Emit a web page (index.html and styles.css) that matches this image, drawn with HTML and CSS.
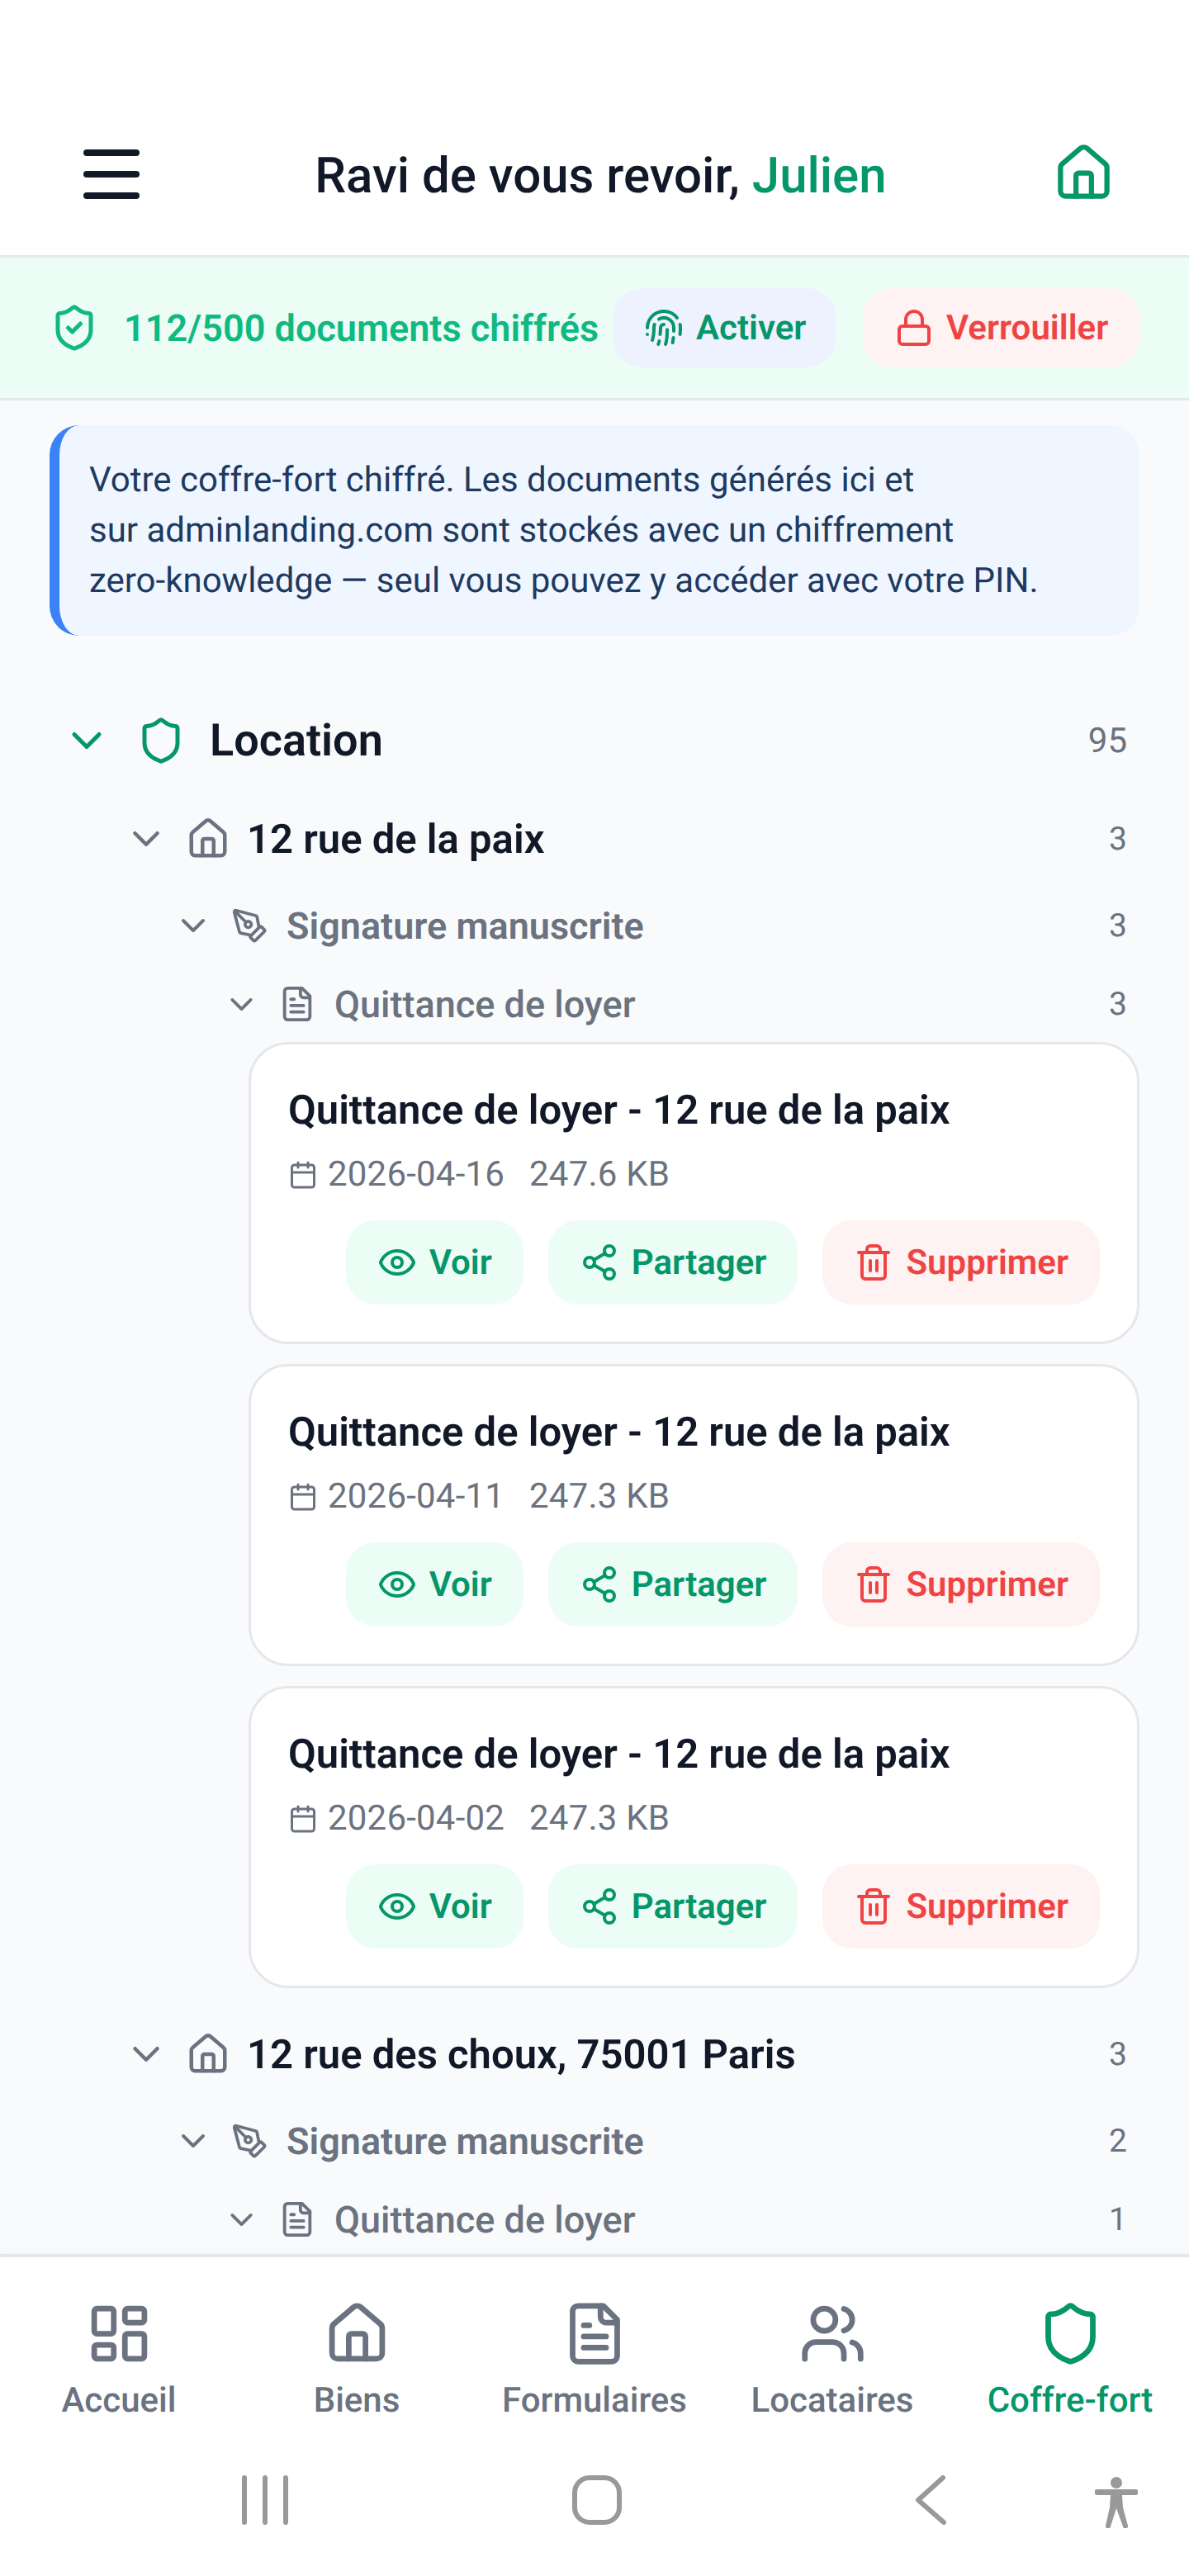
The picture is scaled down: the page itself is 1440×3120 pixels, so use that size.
FILE: index.html
```html
<!DOCTYPE html>
<html lang="fr">
<head>
<meta charset="utf-8">
<title>Coffre-fort</title>
<link rel="stylesheet" href="styles.css">
</head>
<body>
<svg class="defs" width="0" height="0" aria-hidden="true">
  <defs>
    <symbol id="i-home" viewBox="0 0 24 24"><path d="M15 21v-8a1 1 0 0 0-1-1h-4a1 1 0 0 0-1 1v8"/><path d="M3 10a2 2 0 0 1 .709-1.528l7-5.999a2 2 0 0 1 2.582 0l7 5.999A2 2 0 0 1 21 10v9a2 2 0 0 1-2 2H5a2 2 0 0 1-2-2z"/></symbol>
    <symbol id="i-shield" viewBox="0 0 24 24"><path d="M20 13c0 5-3.5 7.500-7.660 8.950a1 1 0 0 1-.670-.010C7.500 20.500 4 18 4 13V6a1 1 0 0 1 1-1c2 0 4.500-1.200 6.240-2.720a1.170 1.170 0 0 1 1.520 0C14.510 3.810 17 5 19 5a1 1 0 0 1 1 1z"/></symbol>
    <symbol id="i-chev" viewBox="0 0 24 24"><path d="m6 9 6 6 6-6"/></symbol>
    <symbol id="i-pen" viewBox="0 0 24 24"><path d="M15.707 21.293a1 1 0 0 1-1.414 0l-1.586-1.586a1 1 0 0 1 0-1.414l5.586-5.586a1 1 0 0 1 1.414 0l1.586 1.586a1 1 0 0 1 0 1.414z"/><path d="m18 13-1.375-6.874a1 1 0 0 0-.746-.776L3.235 2.028a1 1 0 0 0-1.207 1.207L5.350 15.879a1 1 0 0 0 .776.746L13 18"/><path d="m2.300 2.300 7.286 7.286"/><circle cx="11" cy="11" r="2"/></symbol>
    <symbol id="i-doc" viewBox="0 0 24 24"><path d="M15 2H6a2 2 0 0 0-2 2v16a2 2 0 0 0 2 2h12a2 2 0 0 0 2-2V7Z"/><path d="M14 2v4a2 2 0 0 0 2 2h4"/><path d="M10 9H8"/><path d="M16 13H8"/><path d="M16 17H8"/></symbol>
    <symbol id="i-cal" viewBox="0 0 24 24"><path d="M8 2v4M16 2v4"/><rect x="3" y="4" width="18" height="18" rx="2"/><path d="M3 10h18"/></symbol>
    <symbol id="i-eye" viewBox="0 0 24 24"><path d="M2.062 12.348a1 1 0 0 1 0-.696 10.750 10.750 0 0 1 19.876 0 1 1 0 0 1 0 .696 10.750 10.750 0 0 1-19.876 0"/><circle cx="12" cy="12" r="3"/></symbol>
    <symbol id="i-share" viewBox="0 0 24 24"><circle cx="18" cy="5" r="3"/><circle cx="6" cy="12" r="3"/><circle cx="18" cy="19" r="3"/><path d="m8.590 13.510 6.830 3.980M15.410 6.510l-6.820 3.980"/></symbol>
    <symbol id="i-trash" viewBox="0 0 24 24"><path d="M3 6h18"/><path d="M19 6v14a2 2 0 0 1-2 2H7a2 2 0 0 1-2-2V6"/><path d="M8 6V4a2 2 0 0 1 2-2h4a2 2 0 0 1 2 2v2"/><path d="M10 11v6M14 11v6"/></symbol>
  </defs>
</svg>

<div class="app">
  <header class="topbar">
    <button class="burger" aria-label="Menu"><span></span><span></span><span></span></button>
    <h1 class="greeting">Ravi de vous revoir, <em>Julien</em></h1>
    <svg class="ico ico-home-top"><use href="#i-home"/></svg>
  </header>

  <section class="vault-band">
    <svg class="ico ico-band" viewBox="0 0 24 24"><path d="M20 13c0 5-3.5 7.500-7.660 8.950a1 1 0 0 1-.670-.010C7.500 20.500 4 18 4 13V6a1 1 0 0 1 1-1c2 0 4.500-1.200 6.240-2.720a1.170 1.170 0 0 1 1.520 0C14.510 3.810 17 5 19 5a1 1 0 0 1 1 1z"/><path d="m9 12 2 2 4-4"/></svg>
    <span class="vault-count">112/500 documents chiffrés</span>
    <button class="pill pill-blue">
      <svg class="ico ico-pill" viewBox="0 0 24 24"><path d="M12 10a2 2 0 0 0-2 2c0 1.020-.100 2.510-.260 4"/><path d="M14 13.120c0 2.380 0 6.380-1 8.880"/><path d="M17.290 21.020c.120-.600.430-2.300.500-3.020"/><path d="M2 12a10 10 0 0 1 18-6"/><path d="M2 16h.010"/><path d="M21.800 16c.200-2 .131-5.354 0-6"/><path d="M5 19.500C5.500 18 6 15 6 12a6 6 0 0 1 .340-2"/><path d="M8.650 22c.210-.660.450-1.320.570-2"/><path d="M9 6.800a6 6 0 0 1 9 5.200v2"/></svg>
      Activer
    </button>
    <button class="pill pill-red">
      <svg class="ico ico-pill" viewBox="0 0 24 24"><rect x="3" y="11" width="18" height="11" rx="2"/><path d="M7 11V7a5 5 0 0 1 10 0v4"/></svg>
      Verrouiller
    </button>
  </section>

  <main class="content">
    <p class="notice">Votre coffre-fort chiffré. Les documents générés ici et<br>sur adminlanding.com sont stockés avec un chiffrement<br>zero-knowledge — seul vous pouvez y accéder avec votre PIN.</p>

    <div class="tree">
      <div class="row row-root">
        <svg class="ico chev"><use href="#i-chev"/></svg>
        <svg class="ico node"><use href="#i-shield"/></svg>
        <span class="label">Location</span>
        <span class="count">95</span>
      </div>

      <div class="row row-prop">
        <svg class="ico chev"><use href="#i-chev"/></svg>
        <svg class="ico node"><use href="#i-home"/></svg>
        <span class="label">12 rue de la paix</span>
        <span class="count">3</span>
      </div>
      <div class="row row-sign">
        <svg class="ico chev"><use href="#i-chev"/></svg>
        <svg class="ico node"><use href="#i-pen"/></svg>
        <span class="label">Signature manuscrite</span>
        <span class="count">3</span>
      </div>
      <div class="row row-type">
        <svg class="ico chev"><use href="#i-chev"/></svg>
        <svg class="ico node"><use href="#i-doc"/></svg>
        <span class="label">Quittance de loyer</span>
        <span class="count">3</span>
      </div>

      <div class="cards">
        <article class="card">
          <h2 class="card-title">Quittance de loyer - 12 rue de la paix</h2>
          <div class="meta">
            <svg class="ico ico-cal"><use href="#i-cal"/></svg>
            <span class="meta-date">2026-04-16</span><span>247.6 KB</span>
          </div>
          <div class="actions">
            <button class="act act-green"><svg class="ico ico-act"><use href="#i-eye"/></svg>Voir</button>
            <button class="act act-green"><svg class="ico ico-act"><use href="#i-share"/></svg>Partager</button>
            <button class="act act-red"><svg class="ico ico-act"><use href="#i-trash"/></svg>Supprimer</button>
          </div>
        </article>
        <article class="card">
          <h2 class="card-title">Quittance de loyer - 12 rue de la paix</h2>
          <div class="meta">
            <svg class="ico ico-cal"><use href="#i-cal"/></svg>
            <span class="meta-date">2026-04-11</span><span>247.3 KB</span>
          </div>
          <div class="actions">
            <button class="act act-green"><svg class="ico ico-act"><use href="#i-eye"/></svg>Voir</button>
            <button class="act act-green"><svg class="ico ico-act"><use href="#i-share"/></svg>Partager</button>
            <button class="act act-red"><svg class="ico ico-act"><use href="#i-trash"/></svg>Supprimer</button>
          </div>
        </article>
        <article class="card">
          <h2 class="card-title">Quittance de loyer - 12 rue de la paix</h2>
          <div class="meta">
            <svg class="ico ico-cal"><use href="#i-cal"/></svg>
            <span class="meta-date">2026-04-02</span><span>247.3 KB</span>
          </div>
          <div class="actions">
            <button class="act act-green"><svg class="ico ico-act"><use href="#i-eye"/></svg>Voir</button>
            <button class="act act-green"><svg class="ico ico-act"><use href="#i-share"/></svg>Partager</button>
            <button class="act act-red"><svg class="ico ico-act"><use href="#i-trash"/></svg>Supprimer</button>
          </div>
        </article>
      </div>

      <div class="row row-prop row-prop-next">
        <svg class="ico chev"><use href="#i-chev"/></svg>
        <svg class="ico node"><use href="#i-home"/></svg>
        <span class="label">12 rue des choux, 75001 Paris</span>
        <span class="count">3</span>
      </div>
      <div class="row row-sign">
        <svg class="ico chev"><use href="#i-chev"/></svg>
        <svg class="ico node"><use href="#i-pen"/></svg>
        <span class="label">Signature manuscrite</span>
        <span class="count">2</span>
      </div>
      <div class="row row-type">
        <svg class="ico chev"><use href="#i-chev"/></svg>
        <svg class="ico node"><use href="#i-doc"/></svg>
        <span class="label">Quittance de loyer</span>
        <span class="count">1</span>
      </div>
    </div>
  </main>

  <nav class="tabs">
    <a class="tab">
      <svg class="ico ico-tab" viewBox="0 0 24 24"><rect x="3" y="3" width="7" height="9" rx="1"/><rect x="14" y="3" width="7" height="5" rx="1"/><rect x="14" y="12" width="7" height="9" rx="1"/><rect x="3" y="16" width="7" height="5" rx="1"/></svg>
      <span>Accueil</span>
    </a>
    <a class="tab">
      <svg class="ico ico-tab"><use href="#i-home"/></svg>
      <span>Biens</span>
    </a>
    <a class="tab">
      <svg class="ico ico-tab"><use href="#i-doc"/></svg>
      <span>Formulaires</span>
    </a>
    <a class="tab">
      <svg class="ico ico-tab" viewBox="0 0 24 24"><path d="M16 21v-2a4 4 0 0 0-4-4H6a4 4 0 0 0-4 4v2"/><circle cx="9" cy="7" r="4"/><path d="M22 21v-2a4 4 0 0 0-3-3.870"/><path d="M16 3.130a4 4 0 0 1 0 7.750"/></svg>
      <span>Locataires</span>
    </a>
    <a class="tab tab-active">
      <svg class="ico ico-tab"><use href="#i-shield"/></svg>
      <span>Coffre-fort</span>
    </a>
  </nav>

  <div class="sysbar">
    <svg class="sys sys-recents" viewBox="0 0 56 60"><path d="M3 3v54M28 3v54M53 3v54"/></svg>
    <svg class="sys sys-home" viewBox="0 0 60 60"><rect x="3" y="3" width="54" height="54" rx="18"/></svg>
    <svg class="sys sys-back" viewBox="0 0 40 60"><path d="M34 3 4 30l31 27"/></svg>
    <svg class="sys sys-a11y" viewBox="0 0 52 62"><circle cx="26" cy="7" r="7" class="fill"/><path class="fill" d="M3 15h46a3 3 0 0 1 0 7H33l1 15 6 22a3 3 0 0 1-6 1l-8-22-7 22a3 3 0 0 1-6-1l5-22 1-15H3a3 3 0 0 1 0-7Z"/></svg>
  </div>
</div>
</body>
</html>
```

FILE: styles.css
```css
* { box-sizing: border-box; }
html, body { margin: 0; padding: 0; }
body {
  width: 1440px;
  height: 3120px;
  overflow: hidden;
  font-family: Roboto, "Liberation Sans", sans-serif;
  text-rendering: geometricPrecision;
  background: #fff;
  color: #111827;
}
.defs { position: absolute; }
button { font: inherit; border: 0; margin: 0; text-rendering: inherit; }
h1, h2, p { margin: 0; }
em { font-style: normal; }

.ico {
  fill: none;
  stroke: currentColor;
  stroke-width: 2;
  stroke-linecap: round;
  stroke-linejoin: round;
  flex: none;
  display: block;
}

.app {
  display: flex;
  flex-direction: column;
  height: 3120px;
}

/* Top bar */
.topbar {
  height: 312px;
  flex: none;
  display: flex;
  align-items: center;
  padding: 120px 90px 0 90px;
  background: #fff;
  border-bottom: 3px solid #e5e7eb;
}
.burger {
  width: 90px;
  background: none;
  padding: 0 0 0 11px;
  display: flex;
  flex-direction: column;
  gap: 18px;
  margin-top: -7px;
  flex: none;
}
.burger span {
  display: block;
  width: 68px;
  height: 8px;
  border-radius: 4px;
  background: #111827;
}
.greeting {
  flex: 1;
  text-align: center;
  font-size: 60px;
  font-weight: 500;
  line-height: 72px;
  color: #111827;
  margin-top: -4px;
}
.greeting em { color: #059669; }
.ico-home-top {
  width: 75px;
  height: 75px;
  color: #059669;
  margin-top: -11px;
}

/* Vault band */
.vault-band {
  height: 173px;
  flex: none;
  display: flex;
  align-items: center;
  padding: 0 60px;
  background: #ecfdf5;
  border-bottom: 3px solid #e5e7eb;
}
.ico-band { width: 60px; height: 60px; color: #10b981; margin-right: 30px; }
.vault-count {
  font-size: 45px;
  font-weight: 600;
  color: #10b981;
  white-space: nowrap;
  flex: 1;
}
.pill {
  height: 96px;
  border-radius: 36px;
  display: flex;
  align-items: center;
  gap: 15px;
  padding: 0 38px;
  font-size: 42px;
  font-weight: 600;
  flex: none;
}
.pill-blue { background: #eef2ff; color: #059669; width: 271px; margin-right: 32px; }
.pill-red { background: #fef2f2; color: #ef4444; width: 335px; }
.ico-pill { width: 48px; height: 48px; }

/* Main */
.content {
  flex: 1;
  min-height: 0;
  overflow: hidden;
  background: #f9fafb;
  padding: 30px 60px 0;
}
.notice {
  height: 255px;
  background: #eff6ff;
  border-left: 12px solid #3b82f6;
  border-radius: 36px;
  padding: 36px 36px 0;
  font-size: 42px;
  line-height: 61px;
  color: #1e3a5f;
}

.tree { margin-top: 82px; }
.row {
  display: flex;
  align-items: center;
  white-space: nowrap;
}
.row .label { flex: 1; }
.count { color: #6b7280; font-size: 39px; padding-right: 15px; }

.chev { color: #6b7280; }
.node { color: #6b7280; }

.row-root { height: 90px; }
.row-root .chev { width: 60px; height: 60px; color: #059669; margin-left: 15px; }
.row-root .node { width: 60px; height: 60px; color: #059669; margin-left: 30px; }
.row-root .label { font-size: 54px; font-weight: 600; margin-left: 29px; }
.row-root .count { font-size: 42px; }

.row-prop { height: 90px; margin-top: 29px; }
.row-prop .chev { width: 54px; height: 54px; margin-left: 90px; }
.row-prop .node { width: 54px; height: 54px; margin-left: 21px; }
.row-prop .label { font-size: 49px; font-weight: 600; margin-left: 20px; }

.row-sign { height: 90px; margin-top: 15px; }
.row-sign .chev { width: 48px; height: 48px; margin-left: 150px; }
.row-sign .node { width: 45px; height: 45px; margin-left: 22px; }
.row-sign .label { font-size: 45px; font-weight: 600; color: #6b7280; margin-left: 22px; }

.row-type { height: 90px; margin-top: 5px; }
.row-type .chev { width: 45px; height: 45px; margin-left: 210px; }
.row-type .node { width: 46px; height: 46px; margin-left: 22px; }
.row-type .label { font-size: 45px; font-weight: 500; color: #6b7280; margin-left: 22px; }

.cards {
  display: flex;
  flex-direction: column;
  gap: 24px;
  margin-left: 241px;
  margin-top: 1px;
}
.card {
  height: 366px;
  background: #fff;
  border: 3px solid #e5e7eb;
  border-radius: 48px;
  padding: 47px 45px 45px;
  display: flex;
  flex-direction: column;
}
.card-title { font-size: 49px; font-weight: 600; line-height: 66px; color: #111827; }
.meta {
  display: flex;
  align-items: center;
  font-size: 42px;
  letter-spacing: 0.2px;
  color: #6b7280;
  margin-top: 18px;
  line-height: 54px;
}
.ico-cal { width: 36px; height: 36px; margin-right: 12px; }
.meta-date { margin-right: 30px; }
.actions {
  display: flex;
  justify-content: flex-end;
  gap: 30px;
  margin-top: auto;
}
.act {
  height: 102px;
  border-radius: 36px;
  padding: 0 38px;
  display: flex;
  align-items: center;
  gap: 15px;
  font-size: 42px;
  font-weight: 600;
}
.act-green { background: #ecfdf5; color: #059669; }
.act-red { background: #fef2f2; color: #ef4444; }
.ico-act { width: 48px; height: 48px; }

.row-prop-next { margin-top: 35px; }

/* Tabs */
.tabs {
  flex: none;
  height: 214px;
  display: grid;
  grid-template-columns: repeat(5, 1fr);
  background: #fff;
  border-top: 4px solid #e5e7eb;
  padding-top: 52px;
  box-shadow: 0 -6px 12px rgba(0, 0, 0, 0.015);
  position: relative;
}
.tab {
  display: flex;
  flex-direction: column;
  align-items: center;
  color: #6b7280;
  font-size: 42px;
  font-weight: 500;
  line-height: 54px;
  gap: 14px;
}
.tab-active { color: #059669; }
.ico-tab { width: 81px; height: 81px; }

/* System bar */
.sysbar {
  flex: none;
  height: 176px;
  background: #fff;
  padding-top: 54px;
  display: flex;
  align-items: flex-start;
}
.sys {
  fill: none;
  stroke: #999;
  stroke-width: 6;
  stroke-linecap: round;
  stroke-linejoin: round;
  display: block;
  flex: none;
}
.sys-recents { width: 56px; height: 60px; margin-left: 293px; }
.sys-home { width: 60px; height: 60px; margin-left: 344px; }
.sys-back { width: 40px; height: 60px; margin-left: 355px; }
.sys-a11y { width: 52px; height: 62px; margin-left: 178px; margin-top: 2px; }
.sys-a11y .fill { fill: #999; stroke: none; }
```
